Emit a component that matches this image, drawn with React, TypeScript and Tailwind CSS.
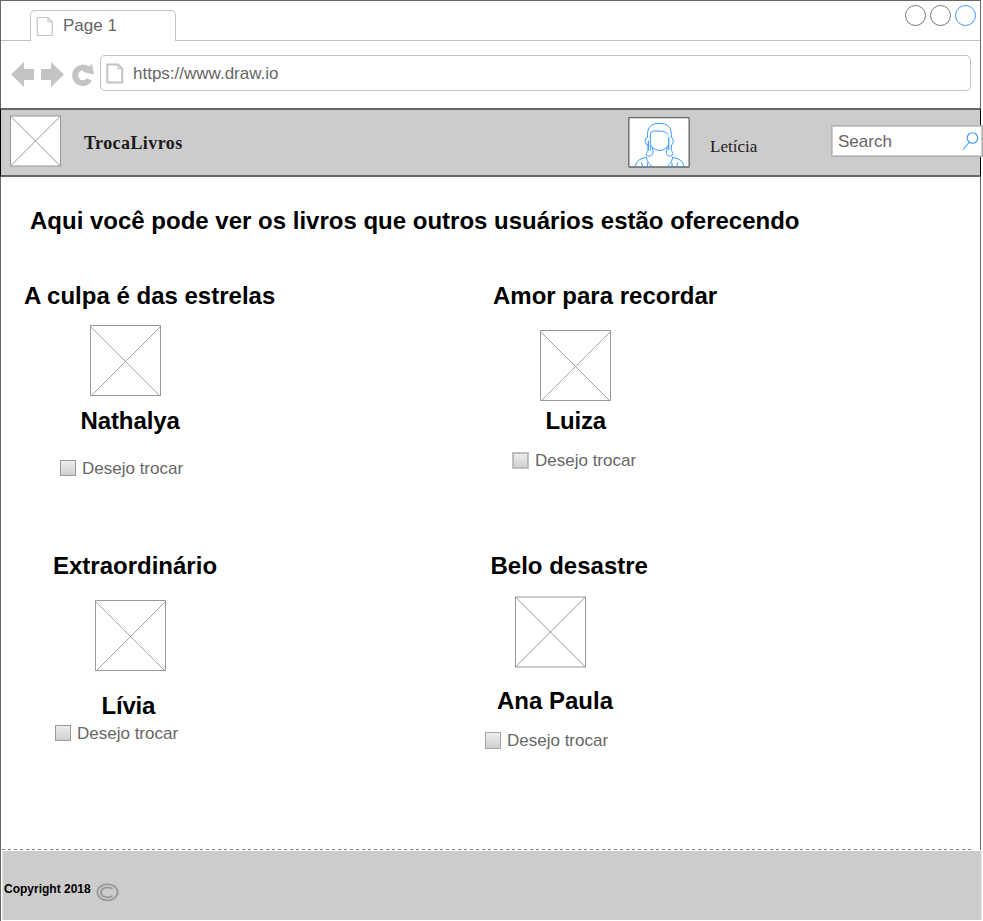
import React from "react";

const arial = "font-['Liberation_Sans',Arial,sans-serif]";
const times = "font-['Liberation_Serif','Times_New_Roman',serif]";

function PageIcon({ weight }: { weight: number }) {
  return (
    <svg width="18" height="21" viewBox="0 0 18 21" fill="none" stroke="#c4c4c4" className="shrink-0">
      <path d="M1.3 1.5H12L16.2 5.7V19.5H1.3Z" strokeWidth={weight} />
      <path d="M12 1.5V5.7H16.2" strokeWidth="1.1" />
    </svg>
  );
}

function ImageBox({ size, soft = false }: { size: number; soft?: boolean }) {
  const end = size - 0.5;
  const shift = soft ? 0.5 : 0;
  return (
    <svg width={size} height={size + (soft ? 1 : 0)} className="block shrink-0" fill="none" stroke="#999">
      <rect x="0.5" y={0.5 + shift} width={size - 1} height={size - 1} fill="#fff" />
      <path
        d={`M0.5 ${0.5 + shift}L${end} ${end + shift}M${end} ${0.5 + shift}L0.5 ${end + shift}`}
        shapeRendering={soft ? "auto" : "crispEdges"}
        strokeWidth={soft ? 1 : 0.9}
      />
    </svg>
  );
}

function TradeCheck({ className, box }: { className: string; box: string }) {
  return (
    <label className={`flex h-5 items-center ${className}`}>
      <span className={`shrink-0 bg-linear-to-b from-[#eee] to-[#cfcfcf] ${box}`} />
      <span className="pt-[2px] text-[17px] leading-5 whitespace-nowrap text-[#666]">Desejo trocar</span>
    </label>
  );
}

const crisp = "size-4 border border-[#999] mr-[6px]";
const soft = "size-[17px] border border-[#c2c2c2] shadow-[inset_0_0_0_1px_#b8b8b8] mr-[6px]";

function Book(props: {
  title: string;
  owner: string;
  titleClass: string;
  imageClass: string;
  ownerClass: string;
  checkClass: string;
  box: string;
  softImage?: boolean;
}) {
  return (
    <article className="flex flex-col items-start">
      <h2 className={`text-2xl leading-7 font-bold whitespace-nowrap ${props.titleClass}`}>{props.title}</h2>
      <div className={props.imageClass}>
        <ImageBox size={71} soft={props.softImage} />
      </div>
      <h3 className={`text-2xl leading-7 font-bold whitespace-nowrap ${props.ownerClass}`}>{props.owner}</h3>
      <TradeCheck className={props.checkClass} box={props.box} />
    </article>
  );
}

function Avatar() {
  return (
    <svg width="62" height="51" viewBox="24 21 186 153" className="block shrink-0">
      <rect x="26.5" y="23" width="181" height="148" rx="2" fill="#fff" stroke="#666" strokeWidth="4" />
      <g fill="none" stroke="#3399ff" strokeWidth="3">
        <path d="M83 83C80 55 90 40 118 40C146 40 156 55 154 83" />
        <path d="M91 122V73Q91 64 100 63H119C132 63 139 67 146 75" />
        <path d="M83 81C72 85 75 105 84 105V122C78 128 76 139 86 138C99 140 102 126 96 112" />
        <path d="M154 81C162 85 161 104 154 105V122C161 129 160 138 151 138C137 139 138 126 142 112" />
        <path d="M85 92V121M146 82V121" strokeWidth="3.5" />
        <path d="M94 106C103 126 134 127 144 106" />
        <path d="M80 142Q48 146 46 171M157 142Q190 146 192 171" />
        <path d="M79 142C83 158 90 166 100 171M158 142C155 158 148 166 138 171" />
        <path d="M64 157L69 171M174 157L169 171M82 158V171M156 158V171" />
      </g>
    </svg>
  );
}

function BrowserChrome() {
  return (
    <div className="flex h-[107px] flex-col">
      <div className="flex h-10 items-end">
        <div className="w-[29px] self-stretch border-b border-[#c4c4c4]" />
        <div className="flex h-[31px] w-[146px] items-center rounded-t-[5px] border border-b-0 border-[#c4c4c4] pl-[5px]">
          <PageIcon weight={1.2} />
          <span className="ml-[9px] text-[17px] leading-5 text-[#666]">Page 1</span>
        </div>
        <div className="flex flex-1 items-start justify-end self-stretch border-b border-[#c4c4c4] pt-1 pr-1">
          <svg width="72" height="22" fill="none" stroke="#777" className="block">
            <circle cx="11.5" cy="10.5" r="10" />
            <circle cx="36.5" cy="10.5" r="10" />
            <circle cx="61.5" cy="10.5" r="10" stroke="#3399ff" />
          </svg>
        </div>
      </div>
      <div className="flex items-start pt-[14px] pl-[10px]">
        <svg width="89" height="36" viewBox="11 55 89 36" fill="#c4c4c4" className="shrink-0">
          <path d="M11 74.5L24 62V69H34V80H24V87Z" />
          <path d="M64 74.5L51 62V69H41V80H51V87Z" />
          <path d="M88 69.4A7.8 7.8 0 1 0 89.5 79.5" fill="none" stroke="#c4c4c4" strokeWidth="5.8" />
          <path d="M92 64L94 74.5L82.5 71.8Z" />
        </svg>
        <div className="flex h-9 w-[871px] items-center rounded-[5px] border border-[#c4c4c4] pl-[5px]">
          <PageIcon weight={2} />
          <span className="ml-[9px] pt-[2px] text-[17px] leading-5 text-[#666]">https://www.draw.io</span>
        </div>
      </div>
    </div>
  );
}

function Header() {
  return (
    <header className="-mx-px flex h-[69px] w-[981px] items-start border-x border-y-2 border-x-black border-y-[#666] bg-[#ccc]">
      <div className="mt-[5px] ml-[9px]">
        <ImageBox size={51} soft />
      </div>
      <span className={`${times} mt-[23px] ml-[23px] w-[544px] shrink-0 text-[18px] leading-5 font-bold tracking-[0.42px] text-[#1a1a1a]`}>TrocaLivros</span>
      <div className="mt-[7px] shrink-0">
        <Avatar />
      </div>
      <span className={`${times} mt-[27px] ml-5 w-[121px] shrink-0 text-[17px] leading-5 text-[#1a1a1a]`}>Letícia</span>
      <div className="mt-[15px] flex h-8 w-[152px] shrink-0 items-center justify-between border border-[#b2b2b2] bg-white pr-[2px] pl-[6px] shadow-[inset_0_0_0_1px_#ccc]">
        <span className="pt-[2px] text-[17px] leading-5 text-[#666]">Search</span>
        <svg width="18" height="20" fill="none" stroke="#3399ff" strokeWidth="1.1">
          <circle cx="10.5" cy="7" r="5.3" />
          <path d="M7.5 11L1 18.5" />
        </svg>
      </div>
    </header>
  );
}

export default function App() {
  return (
    <div className={`${arial} h-[921px] w-[983px] overflow-hidden bg-white text-black`}>
      <div className="flex h-[850px] w-[981px] flex-col border border-b-0 border-[#666]">
        <BrowserChrome />
        <Header />
        <main className="flex-1">
          <h1 className="pt-[30px] pl-[29px] text-2xl leading-7 font-bold">
            Aqui você pode ver os livros que outros usuários estão oferecendo
          </h1>
          <div className="mt-[47px] grid grid-cols-[466px_1fr] grid-rows-[270px_200px]">
            <Book title="A culpa é das estrelas" owner="Nathalya" titleClass="ml-[23px]" imageClass="mt-[15px] ml-[89px]" ownerClass="mt-[11px] ml-[79.5px] tracking-[-0.1px]" checkClass="mt-[23px] ml-[59px]" box={crisp} />
            <Book title="Amor para recordar" owner="Luiza" titleClass="ml-[26px]" imageClass="mt-5 ml-[73px]" ownerClass="mt-[6px] ml-[78.5px] tracking-[-0.2px]" checkClass="mt-[15px] ml-[45px]" box={soft} />
            <Book title="Extraordinário" owner="Lívia" titleClass="ml-[52px]" imageClass="mt-5 ml-[94px]" ownerClass="mt-[21px] ml-[100.5px] tracking-[-0.2px]" checkClass="mt-[3px] ml-[54px]" box={crisp} />
            <Book title="Belo desastre" owner="Ana Paula" titleClass="ml-[23.5px]" imageClass="mt-4 ml-[48px]" ownerClass="mt-[19px] ml-[30px]" checkClass="mt-[15px] ml-[18px]" box="h-[17px] w-4 border border-[#a5a5a5] mr-[6px]" softImage />
          </div>
        </main>
        <div className="ml-px h-px w-[969px] shrink-0 bg-[repeating-linear-gradient(90deg,#808080_0_3px,transparent_3px_6px)]" />
      </div>
      <div className="flex h-[71px] border-l border-[#666] pt-px pb-px">
        <footer className="ml-px flex w-[980px] items-start border-x border-l-[#e8e8e8] border-r-[#e5e5e5] bg-[#ccc]">
          <span className="mt-[30px] ml-px text-[12px] leading-4 font-bold">Copyright 2018</span>
          <svg width="24" height="20" viewBox="96 882 24 20" fill="none" stroke="#999" className="mt-[31px] ml-[5px]">
            <ellipse cx="107.5" cy="892.3" rx="10.1" ry="8.1" strokeWidth="1.8" />
            <path d="M112.5 888.8C107.5 885.9 101 887.8 101 892.3C101 897 107.5 898.8 112.5 895.9" strokeWidth="1.8" />
          </svg>
        </footer>
      </div>
    </div>
  );
}
